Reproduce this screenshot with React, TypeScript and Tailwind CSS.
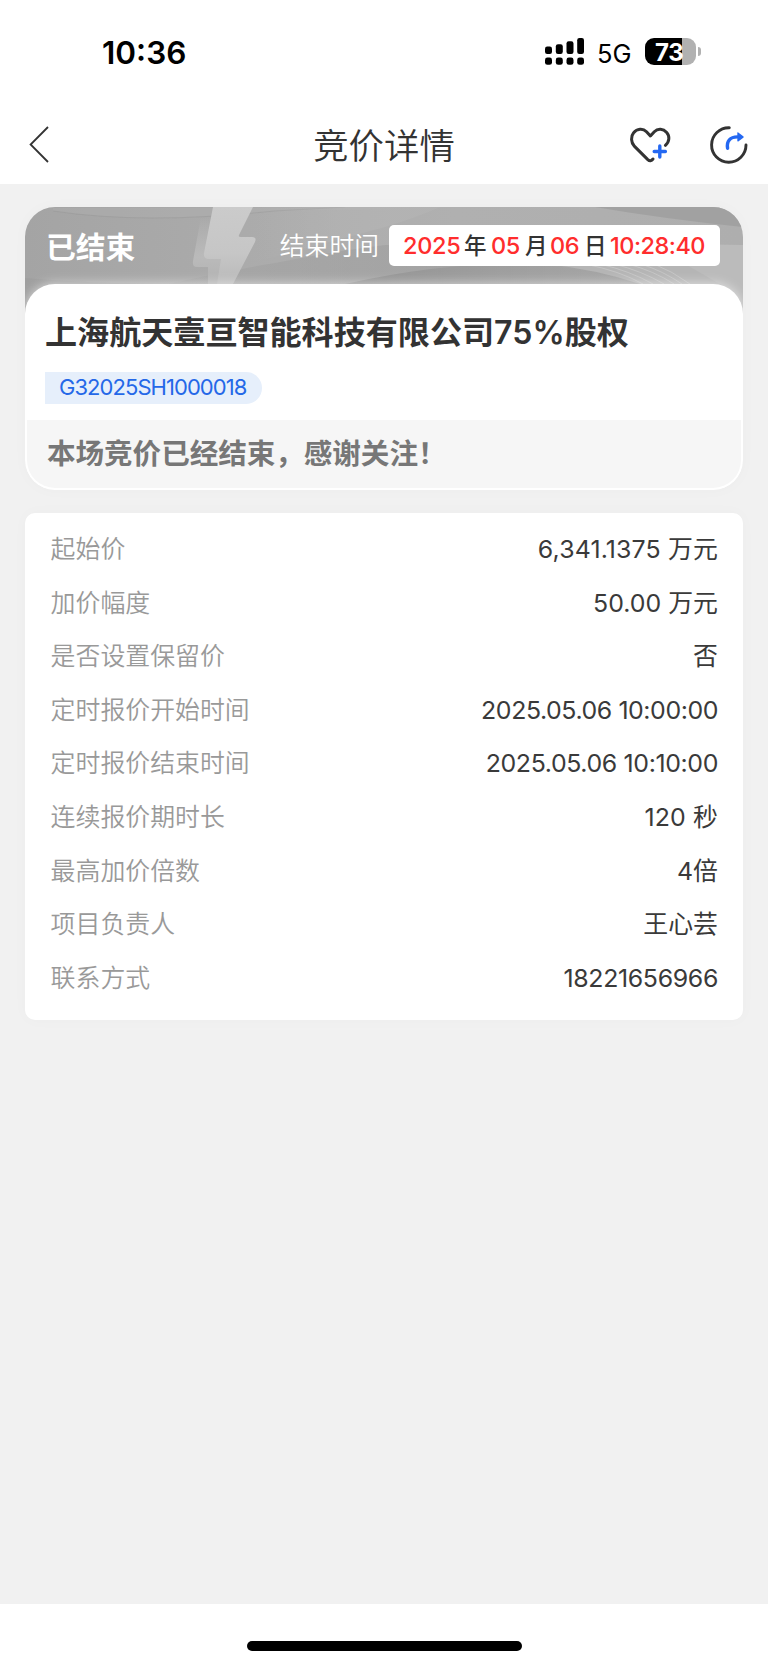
import React from "react";

type Row = { label: string; value: string; tracking: string };

const rows: Row[] = [
  { label: "起始价", value: "6,341.1375 万元", tracking: "tracking-[0.13px]" },
  { label: "加价幅度", value: "50.00 万元", tracking: "tracking-normal" },
  { label: "是否设置保留价", value: "否", tracking: "tracking-normal" },
  { label: "定时报价开始时间", value: "2025.05.06 10:00:00", tracking: "tracking-[-0.42px]" },
  { label: "定时报价结束时间", value: "2025.05.06 10:10:00", tracking: "tracking-[-0.37px]" },
  { label: "连续报价期时长", value: "120 秒", tracking: "tracking-[0.1px]" },
  { label: "最高加价倍数", value: "4倍", tracking: "tracking-normal" },
  { label: "项目负责人", value: "王心芸", tracking: "tracking-normal" },
  { label: "联系方式", value: "18221656966", tracking: "tracking-[-0.35px]" },
];

function SignalIcon() {
  return (
    <svg width="39" height="27" viewBox="0 0 39 27" fill="#000">
      <rect x="0" y="8.5" width="7" height="7.5" rx="2.2" />
      <rect x="10.8" y="6.3" width="7" height="9.7" rx="2.2" />
      <rect x="21.5" y="3.2" width="7" height="12.8" rx="2.2" />
      <rect x="32.2" y="0" width="6.8" height="16" rx="2.2" />
      <rect x="0" y="19.6" width="7" height="7.2" rx="2.4" />
      <rect x="10.8" y="19.6" width="7" height="7.2" rx="2.4" />
      <rect x="21.5" y="19.6" width="7" height="7.2" rx="2.4" />
      <rect x="32.2" y="19.6" width="6.8" height="7.2" rx="2.4" />
    </svg>
  );
}

function Battery() {
  return (
    <div className="flex items-center gap-[2px]">
      <div className="flex h-[27px] w-[51px] items-center overflow-hidden rounded-[9px] bg-[linear-gradient(90deg,#000_0_37px,#b1b1b1_37px)] pl-[10px]">
        <span className="mt-[1px] text-[24px] leading-[27px] font-bold tracking-[-0.3px] text-white">73</span>
      </div>
      <div className="h-[9px] w-[3px] rounded-r-full bg-[#b1b1b1]" />
    </div>
  );
}

function StatusBar() {
  return (
    <div className="flex h-[104px] items-start justify-between pr-[67px] pl-[102px]">
      <span className="mt-[33px] text-[31.5px] leading-[40px] font-semibold text-black">10:36</span>
      <div className="mt-[38px] flex h-[27px] items-center">
        <SignalIcon />
        <span className="mt-[3px] ml-[13px] w-[48px] text-[25.5px] leading-[27px] text-black">5G</span>
        <Battery />
      </div>
    </div>
  );
}

function NavBar() {
  return (
    <div className="grid h-[80px] grid-cols-[1fr_auto_1fr] items-center pr-[20px] pl-[28px]">
      <svg width="22" height="38" viewBox="0 0 22 38" fill="none" stroke="#333" strokeWidth="1.8">
        <path d="M20 2 L2.6 19.5 L20 37" />
      </svg>
      <h1 className="pt-[5px] pr-[8px] text-[35.4px] leading-[48px] font-[350] text-[#333]">竞价详情</h1>
      <div className="flex items-center justify-end gap-[39px] pt-[1px]">
        <svg width="42" height="38" viewBox="0 0 42 38" fill="none" strokeWidth="3" strokeLinecap="round" strokeLinejoin="round">
          <path
            d="M24 33 C22.5 35 20.7 35.4 18.8 33.6 L5.3 20.1 C1.8 16.5 1.7 10.3 4.6 6.8 C8 2.5 14 2.1 17.5 5.7 L21.4 10 L25.3 5.7 C28.8 2.1 34.2 2.5 37.7 6.4 C40.9 10 40.6 15.6 36.4 19.3"
            stroke="#333"
          />
          <path d="M30.8 19.9 V31.1 M25.2 25.5 H36.4" stroke="#2468f2" strokeWidth="3.4" />
        </svg>
        <svg width="38" height="40" viewBox="0 0 38 40" fill="none" strokeLinecap="round">
          <path d="M19.3 2.8 A17.2 17.2 0 1 0 36 20" stroke="#333" strokeWidth="2.9" />
          <path d="M17.6 23.2 C16.4 16.1 20.2 11.9 27.4 11.9" stroke="#2468f2" strokeWidth="3.4" />
          <path d="M27.3 7.6 Q27.5 6.9 28.3 7.4 L33.3 11.2 Q34.2 12 33.3 12.8 L28.3 16.4 Q27.5 16.9 27.3 16.1 Z" fill="#2468f2" />
        </svg>
      </div>
    </div>
  );
}

function BannerArt() {
  return (
    <svg className="absolute inset-0" width="718" height="120" viewBox="0 0 718 120" fill="none">
      <defs>
        <linearGradient id="base" x1="0" x2="1" y1="0" y2="0">
          <stop offset="0" stopColor="#a4a4a4" />
          <stop offset="0.35" stopColor="#acacac" />
          <stop offset="0.6" stopColor="#b0b0b0" />
          <stop offset="1" stopColor="#aeaeae" />
        </linearGradient>
        <linearGradient id="bolt" x1="0" x2="0" y1="0" y2="1">
          <stop offset="0" stopColor="#cbcbcb" />
          <stop offset="0.6" stopColor="#c6c6c6" />
          <stop offset="1" stopColor="#b9b9b9" />
        </linearGradient>
        <linearGradient id="boltBack" x1="0" x2="0" y1="0" y2="1">
          <stop offset="0" stopColor="#bdbdbd" stopOpacity="0" />
          <stop offset="0.6" stopColor="#bababa" />
          <stop offset="1" stopColor="#b2b2b2" />
        </linearGradient>
        <linearGradient id="shade" gradientUnits="userSpaceOnUse" x1="120" x2="420" y1="0" y2="0">
          <stop offset="0" stopColor="#999" stopOpacity="0.2" />
          <stop offset="1" stopColor="#9c9c9c" stopOpacity="0.6" />
        </linearGradient>
        <linearGradient id="light" gradientUnits="userSpaceOnUse" x1="230" x2="320" y1="0" y2="0">
          <stop offset="0" stopColor="#b6b6b6" stopOpacity="0" />
          <stop offset="1" stopColor="#b6b6b6" stopOpacity="0.5" />
        </linearGradient>
        <linearGradient id="dark" gradientUnits="userSpaceOnUse" x1="320" x2="610" y1="0" y2="0">
          <stop offset="0" stopColor="#8c8c8c" stopOpacity="0.75" />
          <stop offset="1" stopColor="#a8a8a8" stopOpacity="0.5" />
        </linearGradient>
      </defs>
      <rect width="718" height="120" fill="url(#base)" />
      <path d="M28 1 H400 Q300 3 250 5 Q120 18 28 4 Z" fill="#b0b0b0" opacity="0.45" />
      <path d="M28 4 Q120 18 250 4 L320 0" stroke="#989898" strokeOpacity="0.5" />
      <path d="M230 55 Q300 36 360 20 Q390 11 415 0 H230 Z" fill="url(#light)" />
      <path d="M130 80 Q190 66 250 56 Q310 44 360 38 L718 38 V80 Z" fill="url(#shade)" />
      <path d="M0 71 Q60 76 130 77 V120 H0 Z" fill="#999" opacity="0.4" />
      <path d="M570 0 Q640 12 718 20 V0 Z" fill="#9d9d9d" opacity="0.8" />
      <path d="M660 37 L718 38 V120 H640 Z" fill="#bbbbbb" />
      <path d="M320 77 Q420 55 500 57 Q560 60 610 77 Z" fill="url(#dark)" />
      <path d="M520 57 Q570 62 615 77 L700 80 L660 57 Z" fill="#b5b5b5" />
      <g stroke="#c8c8c8" strokeOpacity="0.8">
        <path d="M560 57 Q595 64 618 77" />
        <path d="M575 57 Q605 64 628 77" />
        <path d="M589 57 Q617 64 639 77" />
        <path d="M603 57 Q629 64 649 77" />
        <path d="M616 57 Q638 64 657 77" />
        <path d="M629 57 Q647 64 665 77" />
      </g>
      <path d="M176 10 L168 54 Q167 60 172 60 L183 60 L183 77 H200 L200 10 Z" fill="url(#boltBack)" />
      <path d="M188 0 H228 L214 28 Q213 30 216 30 H227 Q232 30 230 35 L208 77 H192 L196 52 H184 Q178 52 179 46 Z" fill="url(#bolt)" />
    </svg>
  );
}

function EndTime() {
  return (
    <div className="flex h-[41px] w-[331px] items-center rounded-[5px] bg-white pl-[14px] text-[23.5px] font-medium tracking-[-0.3px] whitespace-nowrap text-[#333]">
      <span className="w-[61px] text-[#ff2d2d]">2025</span>
      <span className="w-[27px] text-[22.5px]">年</span>
      <span className="w-[34px] text-[#ff2d2d]">05</span>
      <span className="w-[25px] text-[22.5px]">月</span>
      <span className="w-[34px] text-[#ff2d2d]">06</span>
      <span className="w-[26px] text-[22.5px]">日</span>
      <span className="tracking-[-0.5px] text-[#ff2d2d]">10:28:40</span>
    </div>
  );
}

function SummaryCard() {
  return (
    <section className="relative overflow-hidden rounded-[30px] shadow-[0_0_16px_rgba(0,0,0,0.025)]">
      <BannerArt />
      <div className="relative flex h-[77px] items-center pr-[23px] pl-[21px] text-white">
        <span className="pt-[2px] text-[29.8px] leading-[40px] font-semibold">已结束</span>
        <span className="mr-[10px] ml-auto text-[24.8px] leading-[34px] font-[350]">结束时间</span>
        <EndTime />
      </div>
      <div className="relative rounded-[30px] bg-white px-[2px] pb-[2px] shadow-[0_0_12px_rgba(255,255,255,0.65)]">
        <div className="h-[136px] px-[18px] pt-[28px]">
          <h2 className="text-[32.1px] leading-[42px] font-semibold whitespace-nowrap text-[#333]">
            上海航天壹亘智能科技有限公司75%股权
          </h2>
          <div className="mt-[18px] flex h-[32px] w-[217px] items-center rounded-r-full bg-[#e6effb] pb-[1px] pl-[14px] text-[22px] font-normal tracking-[-0.95px] text-[#2468e8]">
            G32025SH1000018
          </div>
        </div>
        <div className="flex h-[68px] items-center rounded-b-[28px] bg-[#f6f6f6] px-[20px] text-[28.6px] font-semibold tracking-[-0.06px] text-[#777]">
          本场竞价已经结束，感谢关注！
        </div>
      </div>
    </section>
  );
}

function DetailCard() {
  return (
    <section className="h-[507px] rounded-[10px] bg-white px-[25px] pt-[9.2px] shadow-[0_0_16px_rgba(0,0,0,0.025)]">
      {rows.map((row) => (
        <div key={row.label} className="flex h-[53.6px] items-center justify-between text-[24.9px] leading-[36px]">
          <span className="pl-[0.6px] font-[350] text-[#999]">{row.label}</span>
          <span className={"font-normal text-[#3a3a3a] " + row.tracking}>{row.value}</span>
        </div>
      ))}
    </section>
  );
}

export default function App() {
  return (
    <div className="flex h-[1665px] w-[768px] flex-col overflow-hidden bg-[#f1f1f1] font-['Inter','Noto_Sans_CJK_SC',sans-serif]">
      <header className="bg-white">
        <StatusBar />
        <NavBar />
      </header>
      <main className="flex flex-1 flex-col gap-[23px] px-[25px] pt-[23px]">
        <SummaryCard />
        <DetailCard />
      </main>
      <footer className="flex h-[61px] justify-center bg-white pt-[37px]">
        <div className="h-[10px] w-[275px] rounded-full bg-black" />
      </footer>
    </div>
  );
}
